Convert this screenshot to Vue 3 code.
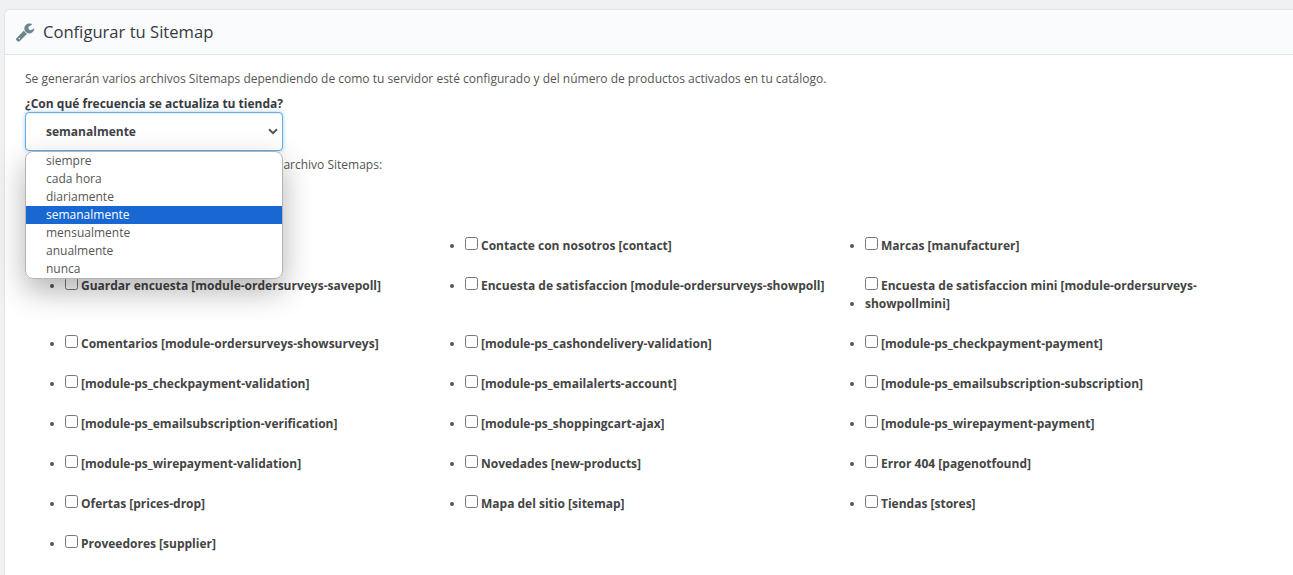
<script setup>
const options = ['siempre', 'cada hora', 'diariamente', 'semanalmente', 'mensualmente', 'anualmente', 'nunca']
const pages = [
  'Inicio [index]',
  'Contacte con nosotros [contact]',
  'Marcas [manufacturer]',
  'Guardar encuesta [module-ordersurveys-savepoll]',
  'Encuesta de satisfaccion [module-ordersurveys-showpoll]',
  'Encuesta de satisfaccion mini [module-ordersurveys-showpollmini]',
  'Comentarios [module-ordersurveys-showsurveys]',
  '[module-ps_cashondelivery-validation]',
  '[module-ps_checkpayment-payment]',
  '[module-ps_checkpayment-validation]',
  '[module-ps_emailalerts-account]',
  '[module-ps_emailsubscription-subscription]',
  '[module-ps_emailsubscription-verification]',
  '[module-ps_shoppingcart-ajax]',
  '[module-ps_wirepayment-payment]',
  '[module-ps_wirepayment-validation]',
  'Novedades [new-products]',
  'Error 404 [pagenotfound]',
  'Ofertas [prices-drop]',
  'Mapa del sitio [sitemap]',
  'Tiendas [stores]',
  'Proveedores [supplier]'
]
</script>

<template>
  <div class="page">
    <section class="card">
      <header class="head">
        <svg class="wrench" viewBox="0 0 1792 1792" aria-hidden="true">
          <path fill="#6c868e" d="M448 1472q0-26-19-45t-45-19-45 19-19 45 19 45 45 19 45-19 19-45zm644-420l-682 682q-37 37-90 37-52 0-91-37l-106-108q-38-36-38-90 0-53 38-91l681-681q39 98 114.5 173.5t173.5 114.5zm634-435q0 39-23 106-47 134-164.5 217.5t-258.5 83.5q-185 0-316.5-131.5t-131.5-316.5 131.5-316.5 316.5-131.5q58 0 121.5 16.5t107.5 46.5q16 11 16 28t-16 28l-293 169v224l193 107q5-3 79-48.5t135.5-81 70.5-35.5q15 0 23.5 10t8.5 25z"/>
        </svg>
        <h1>Configurar tu Sitemap</h1>
      </header>
      <div class="body">
        <p class="intro">Se generarán varios archivos Sitemaps dependiendo de como tu servidor esté configurado y del número de productos activados en tu catálogo.</p>
        <label class="q" for="freq">¿Con qué frecuencia se actualiza tu tienda?</label>
        <div class="select-wrap">
          <select id="freq" class="freq">
            <option v-for="o in options" :key="o" :selected="o === 'semanalmente'">{{ o }}</option>
          </select>
          <svg class="chev" viewBox="0 0 10 7" aria-hidden="true">
            <path d="M1 1.2 5 5.2 9 1.2" fill="none" stroke="#555" stroke-width="2" />
          </svg>
          <div class="popup" role="listbox">
            <div v-for="o in options" :key="o" class="opt" :class="{ on: o === 'semanalmente' }">{{ o }}</div>
          </div>
        </div>
        <p class="hint">Indica las páginas que no deseas incluir en tu archivo Sitemaps:</p>
        <label class="all"><input type="checkbox" /> Seleccionar todo</label>
        <ul class="pages">
          <li v-for="p in pages" :key="p">
            <label class="check"><input type="checkbox" />{{ p }}</label>
          </li>
        </ul>
      </div>
    </section>
  </div>
</template>

<style>
html, body { margin: 0; background: #eff1f2; overflow: hidden; }
</style>

<style scoped>
.page {
  height: 575px;
  overflow: hidden;
  box-sizing: border-box;
  padding: 10px 0 0 5px;
  font-family: "Open Sans", sans-serif;
  font-size: 12px;
  line-height: 18px;
  color: #363a41;
}
.card {
  background: #fff;
  border-radius: 5px 0 0 0;
  box-shadow: 0 0 0 1px #dfe7ea;
  min-height: 600px;
}
.head {
  display: flex;
  align-items: center;
  gap: 8px;
  height: 45px;
  box-sizing: border-box;
  padding-left: 10px;
  background: #fafbfc;
  border-bottom: 1px solid #dbe6e9;
  border-radius: 5px 0 0 0;
}
.wrench { width: 20px; height: 20px; }
h1 {
  margin: 0;
  font-size: 16.6px;
  font-weight: 400;
  color: #363a41;
}
.body { padding: 15px 20px 0; }
.intro { margin: 0 0 7px; color: #555; }
.q { display: block; font-weight: 700; color: #363a41; }
.select-wrap { position: relative; width: 258px; margin-top: -1px; }
.freq {
  display: block;
  width: 258px;
  height: 39px;
  box-sizing: border-box;
  padding: 0 20px;
  appearance: none;
  font: 700 12px "Open Sans", sans-serif;
  color: #3f4248;
  background: #fff;
  border: 1px solid #66afe9;
  border-radius: 4px;
  outline: 0;
  box-shadow: inset 0 1px 1px rgba(0, 0, 0, .075), 0 0 4px rgba(102, 175, 233, .6);
}
.chev {
  position: absolute;
  left: 243px;
  top: 16px;
  width: 10px;
  height: 7px;
  pointer-events: none;
}
.popup {
  position: absolute;
  left: 0;
  top: 39px;
  z-index: 5;
  width: 258px;
  box-sizing: border-box;
  padding: 0;
  background: #fff;
  border: 1px solid #b5b5b5;
  border-radius: 8px;
  overflow: hidden;
  color: #555;
}
.select-wrap::after {
  content: "";
  position: absolute;
  left: 0;
  top: 39px;
  width: 258px;
  height: 128px;
  border-radius: 8px;
  box-shadow: 0 12px 30px rgba(0, 0, 0, .3);
  z-index: 4;
}
.opt { height: 18px; padding-left: 20px; }
.opt.on { background: #1967d2; color: #fff; }
.hint { margin: 5px 0 0 3px; color: #555; }
.all { display: block; margin-top: 23px; font-weight: 700; }
.all input { margin: 0; }
.pages {
  list-style: disc;
  margin: 22px 0 0;
  padding: 0 0 0 40px;
  display: grid;
  grid-template-columns: repeat(3, 400px);
  row-gap: 22px;
  color: #555;
}
.pages li { display: list-item; }
.check { display: inline-block; font-weight: 700; color: #444; }
.check input {
  width: 13px;
  height: 13px;
  margin: 0 3px 0 0;
}
</style>
